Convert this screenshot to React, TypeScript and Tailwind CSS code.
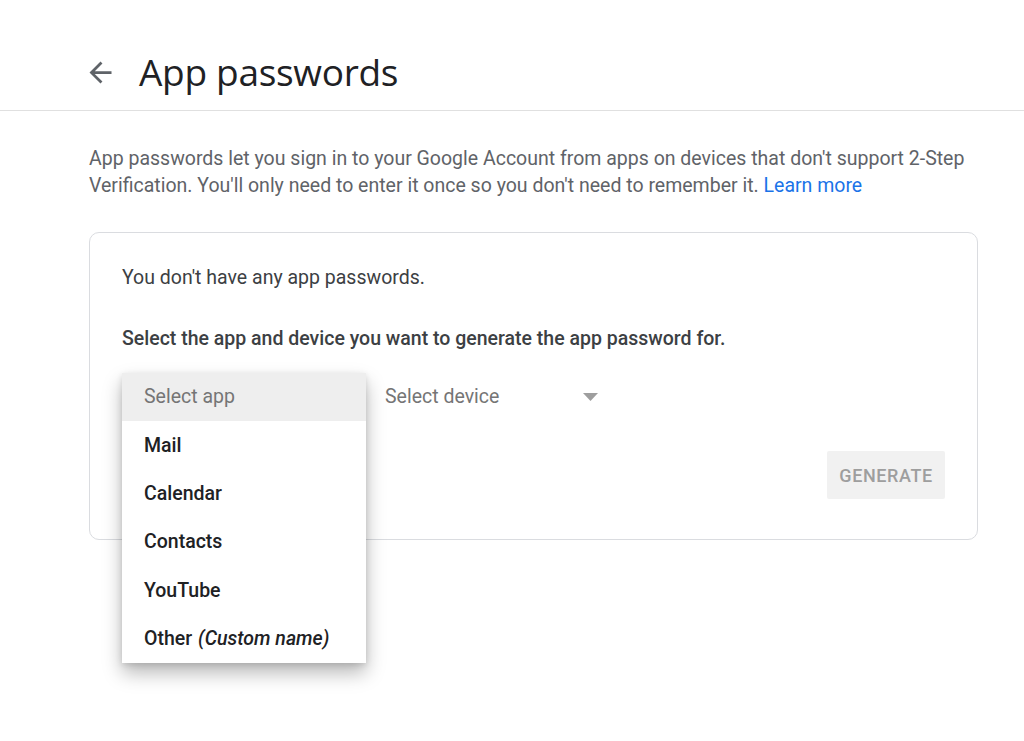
import { useState } from "react";

const apps = ["Mail", "Calendar", "Contacts", "YouTube"];

export default function App() {
  const [open] = useState(true);

  return (
    <div className="min-h-[741px] bg-white text-[#3c4043]" style={{ fontFamily: "Roboto, 'Liberation Sans', sans-serif" }}>
      <div className="h-[111px] border-b border-[#e0e0e0] flex items-center pl-[84px] pt-[34px]">
        <button className="w-[33px] h-[33px] flex items-center justify-center text-[#5f6368]">
          <svg viewBox="0 0 24 24" width="33" height="33" fill="currentColor">
            <path d="M20 11H7.83l5.59-5.59L12 4l-8 8 8 8 1.41-1.41L7.83 13H20v-2z" />
          </svg>
        </button>
        <h1 className="ml-[22px] text-[37px] leading-[44px] text-[#202124] font-normal tracking-[-0.3px]" style={{ fontFamily: "'Open Sans', Roboto, sans-serif" }}>
          App passwords
        </h1>
      </div>

      <div className="ml-[89px] w-[889px]">
        <p className="mt-[34px] text-[19.5px] leading-[27px] text-[#5f6368]">
          App passwords let you sign in to your Google Account from apps on devices that don't support 2-Step Verification. You'll only need to enter it once so you don't need to remember it.{" "}
          <a className="text-[#1a73e8]">Learn more</a>
        </p>

        <div className="mt-[33px] border border-[#dadce0] rounded-[10px] pt-[31px] px-8 pb-[40px]">
          <p className="text-[19.5px] leading-[27px] text-[#3c4043]">You don't have any app passwords.</p>
          <p className="mt-[34px] text-[19.5px] leading-[27px] font-medium text-[#3c4043]">
            Select the app and device you want to generate the app password for.
          </p>

          <div className="mt-[21px] flex h-12">
            <div className="relative w-[244px]">
              <div className="h-12 flex items-center pl-[22px] text-[19.5px] text-[#757575]">Select app</div>
              {open && (
                <div className="absolute left-0 top-0 w-[244px] bg-white z-10 shadow-[0_10px_18px_rgba(0,0,0,0.28),0_2px_6px_rgba(0,0,0,0.12)]">
                  <div className="h-12 flex items-center pl-[22px] bg-[#eeeeee] text-[19.5px] text-[#757575]">Select app</div>
                  {apps.map((a) => (
                    <div key={a} className="h-[48.4px] flex items-center pl-[22px] text-[19.5px] font-medium text-[#202124]">
                      {a}
                    </div>
                  ))}
                  <div className="h-[48.4px] flex items-center pl-[22px] text-[19.5px] font-medium text-[#202124]">
                    <span>Other</span>
                    <i className="ml-[6px] font-medium">(Custom name)</i>
                  </div>
                </div>
              )}
            </div>
            <div className="w-[244px] flex items-center justify-between pl-[19px] pr-[12px] text-[19.5px] text-[#757575]">
              <span>Select device</span>
              <svg width="15" height="8" viewBox="0 0 15 8" fill="#9e9e9e">
                <path d="M0 0h15L7.5 8z" />
              </svg>
            </div>
          </div>

          <div className="mt-[30px] flex justify-end">
            <button className="h-12 w-[118px] bg-[#f1f1f1] rounded-[2px] text-[18px] font-medium tracking-[0.6px] text-[#9e9e9e]">
              GENERATE
            </button>
          </div>
        </div>
      </div>
    </div>
  );
}
